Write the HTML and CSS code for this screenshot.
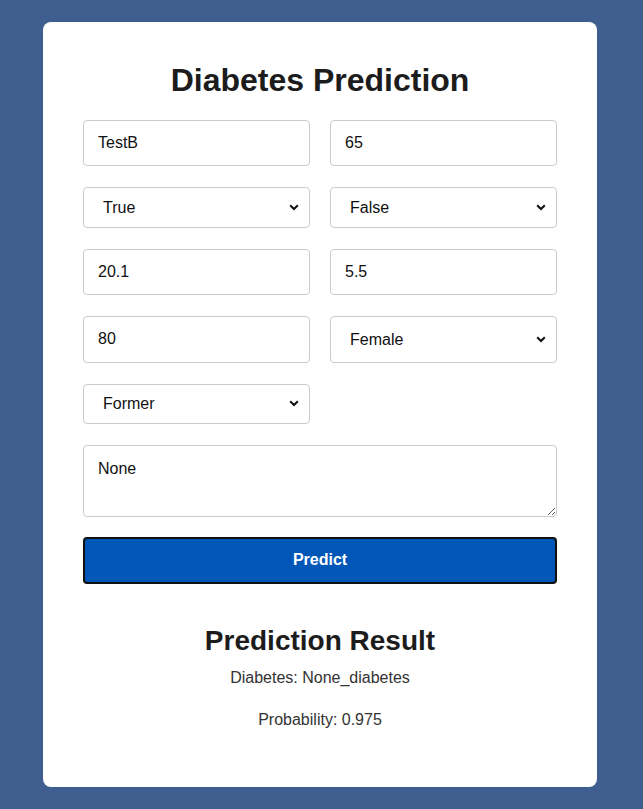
FILE: index.html
```html
<!DOCTYPE html>
<html lang="en">
<head>
<meta charset="utf-8">
<title>Diabetes Prediction</title>
<link rel="stylesheet" href="styles.css">
</head>
<body>
<div class="card">
  <h1 class="title">Diabetes Prediction</h1>
  <form class="form">
    <input class="field" type="text" value="TestB">
    <input class="field" type="text" value="65">
    <select class="field sel"><option>True</option><option>False</option></select>
    <select class="field sel"><option>False</option><option>True</option></select>
    <input class="field" type="text" value="20.1">
    <input class="field" type="text" value="5.5">
    <input class="field" type="text" value="80">
    <select class="field sel tall"><option>Female</option><option>Male</option></select>
    <select class="field sel"><option>Former</option><option>Never</option><option>Current</option></select>
    <div class="spacer"></div>
    <textarea class="field area wide">None</textarea>
    <button class="btn wide" type="button">Predict</button>
  </form>
  <h2 class="result-title">Prediction Result</h2>
  <p class="result-line first">Diabetes: None_diabetes</p>
  <p class="result-line">Probability: 0.975</p>
</div>
</body>
</html>
```
FILE: styles.css
```css
html, body {
  margin: 0;
  padding: 0;
}
body {
  background: #3f5e90;
  font-family: "Liberation Sans", Arial, sans-serif;
  padding: 22px 3px 22px 0;
  color: #222;
}
.card {
  width: 554px;
  height: 765px;
  box-sizing: border-box;
  margin: 0 auto;
  background: #fff;
  border-radius: 8px;
  padding: 40px;
}
.title {
  margin: 0 0 21px;
  font-size: 32px;
  font-weight: bold;
  text-align: center;
  line-height: normal;
  color: #1c1c1c;
}
.form {
  display: grid;
  grid-template-columns: 1fr 1fr;
  column-gap: 20px;
  row-gap: 21px;
}
.field {
  box-sizing: border-box;
  width: 100%;
  font-family: "Liberation Sans", Arial, sans-serif;
  font-size: 16px;
  color: #111;
  border: 1px solid #ccc;
  border-radius: 4px;
  background-color: #fff;
  margin: 0;
}
input.field {
  height: 46.4px;
  padding: 0 14px;
}
.sel {
  height: 40.4px;
  padding: 0 30px 0 19px;
  -webkit-appearance: none;
  appearance: none;
  background-image: url("data:image/svg+xml,%3Csvg xmlns='http://www.w3.org/2000/svg' width='10' height='7' viewBox='0 0 10 7'%3E%3Cpath d='M1.2 1.3 L5 5 L8.8 1.3' fill='none' stroke='%23111' stroke-width='2.1'/%3E%3C/svg%3E");
  background-repeat: no-repeat;
  background-position: right 10px center;
  background-size: 10px 7px;
}
.sel.tall {
  height: 46.4px;
}
.area {
  height: 72px;
  padding: 14px;
  resize: vertical;
  line-height: normal;
}
.wide {
  grid-column: 1 / 3;
}
.btn {
  box-sizing: border-box;
  height: 47px;
  margin-top: -1px;
  background: #0057b7;
  color: #fff;
  border: 2px solid #111;
  border-radius: 4px;
  font-family: "Liberation Sans", Arial, sans-serif;
  font-size: 16px;
  font-weight: bold;
}
.result-title {
  margin: 41px 0 12px;
  font-size: 28px;
  font-weight: bold;
  text-align: center;
  line-height: normal;
  color: #1c1c1c;
}
.result-line {
  margin: 24px 0 0;
  font-size: 16px;
  text-align: center;
  line-height: normal;
  color: #333;
}
.result-line.first {
  margin-top: 0;
}
```
